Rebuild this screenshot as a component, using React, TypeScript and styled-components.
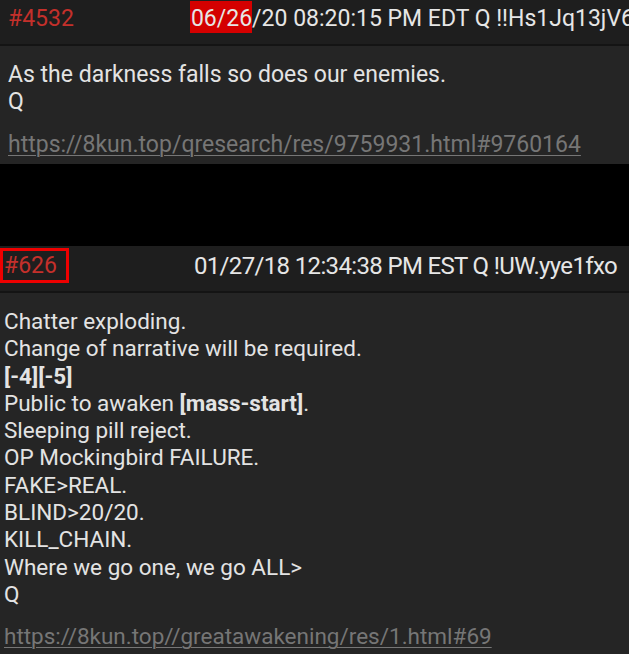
import React from 'react';
import styled, { createGlobalStyle } from 'styled-components';

const Global = createGlobalStyle`
  html, body {
    margin: 0;
    padding: 0;
    background: #000;
  }
  body {
    font-family: Roboto, "Noto Sans", "Liberation Sans", sans-serif;
    overflow: hidden;
  }
`;

const Page = styled.div`
  width: 629px;
  height: 654px;
  overflow: hidden;
  background: #000;
  display: flex;
  flex-direction: column;
  gap: 82px;
`;

const Card = styled.article`
  display: flex;
  flex-direction: column;
  background: #252525;
`;

const Header = styled.header<{ $height: number; $lift: number; $left: number }>`
  display: flex;
  align-items: center;
  box-sizing: border-box;
  height: ${({ $height }) => $height}px;
  padding: 0 12px ${({ $lift }) => $lift}px ${({ $left }) => $left}px;
  background: #1e1e1e;
  border-bottom: 2px solid #141414;
  white-space: nowrap;
  overflow: hidden;
`;

const Num = styled.span<{ $boxed?: boolean }>`
  color: #c4302b;
  font-size: 23px;
  line-height: 1;
  ${({ $boxed }) =>
    $boxed
      ? `
    border: 3px solid #ee0000;
    padding: 3px 9px 3px 1px;
  `
      : ''}
`;

const Stamp = styled.span<{ $condensed?: boolean; $start?: number }>`
  color: #e6e6e6;
  font-size: ${({ $condensed }) => ($condensed ? '24px' : '23px')};
  letter-spacing: ${({ $condensed }) => ($condensed ? '-0.65px' : '0')};
  margin-left: ${({ $start }) => ($start !== undefined ? `${$start}px` : 'auto')};
  flex-shrink: 0;
`;

const Mark = styled.span`
  background: #d40000;
  padding: 4px 0 1px 1px;
`;

const Body = styled.div<{ $pad: string; $size: number; $lh: number }>`
  padding: ${({ $pad }) => $pad};
  color: #e3e3e3;
  font-size: ${({ $size }) => $size}px;
  line-height: ${({ $lh }) => $lh}px;
`;

const Line = styled.div``;

const Strong = styled.b`
  font-weight: 700;
`;

const Link = styled.a<{ $top: number }>`
  display: block;
  margin-top: ${({ $top }) => $top}px;
  color: #767676;
  text-decoration: underline;
  text-underline-offset: 3px;
  text-decoration-thickness: 1px;
`;

const lines: React.ReactNode[] = [
  'Chatter exploding.',
  'Change of narrative will be required.',
  <Strong>[-4][-5]</Strong>,
  <>
    Public to awaken <Strong>[mass-start]</Strong>.
  </>,
  'Sleeping pill reject.',
  'OP Mockingbird FAILURE.',
  'FAKE>REAL.',
  'BLIND>20/20.',
  'KILL_CHAIN.',
  'Where we go one, we go ALL>',
  'Q',
];

export default function App() {
  return (
    <>
      <Global />
      <Page>
        <Card>
          <Header $height={46} $lift={8} $left={8}>
            <Num>#4532</Num>
            <Stamp $start={116}>
              <Mark>06/26</Mark>/20 08:20:15 PM EDT Q !!Hs1Jq13jV6
            </Stamp>
          </Header>
          <Body $pad="15px 8px 6px" $size={23} $lh={27}>
            <Line>As the darkness falls so does our enemies.</Line>
            <Line>Q</Line>
            <Link $top={16}>https://8kun.top/qresearch/res/9759931.html#9760164</Link>
          </Body>
        </Card>
        <Card>
          <Header $height={47} $lift={6} $left={0}>
            <Num $boxed>#626</Num>
            <Stamp $condensed>01/27/18 12:34:38 PM EST Q !UW.yye1fxo</Stamp>
          </Header>
          <Body $pad="15px 4px 8px" $size={22.5} $lh={27.3}>
            {lines.map((l, i) => (
              <Line key={i}>{l}</Line>
            ))}
            <Link $top={15}>https://8kun.top//greatawakening/res/1.html#69</Link>
          </Body>
        </Card>
      </Page>
    </>
  );
}
